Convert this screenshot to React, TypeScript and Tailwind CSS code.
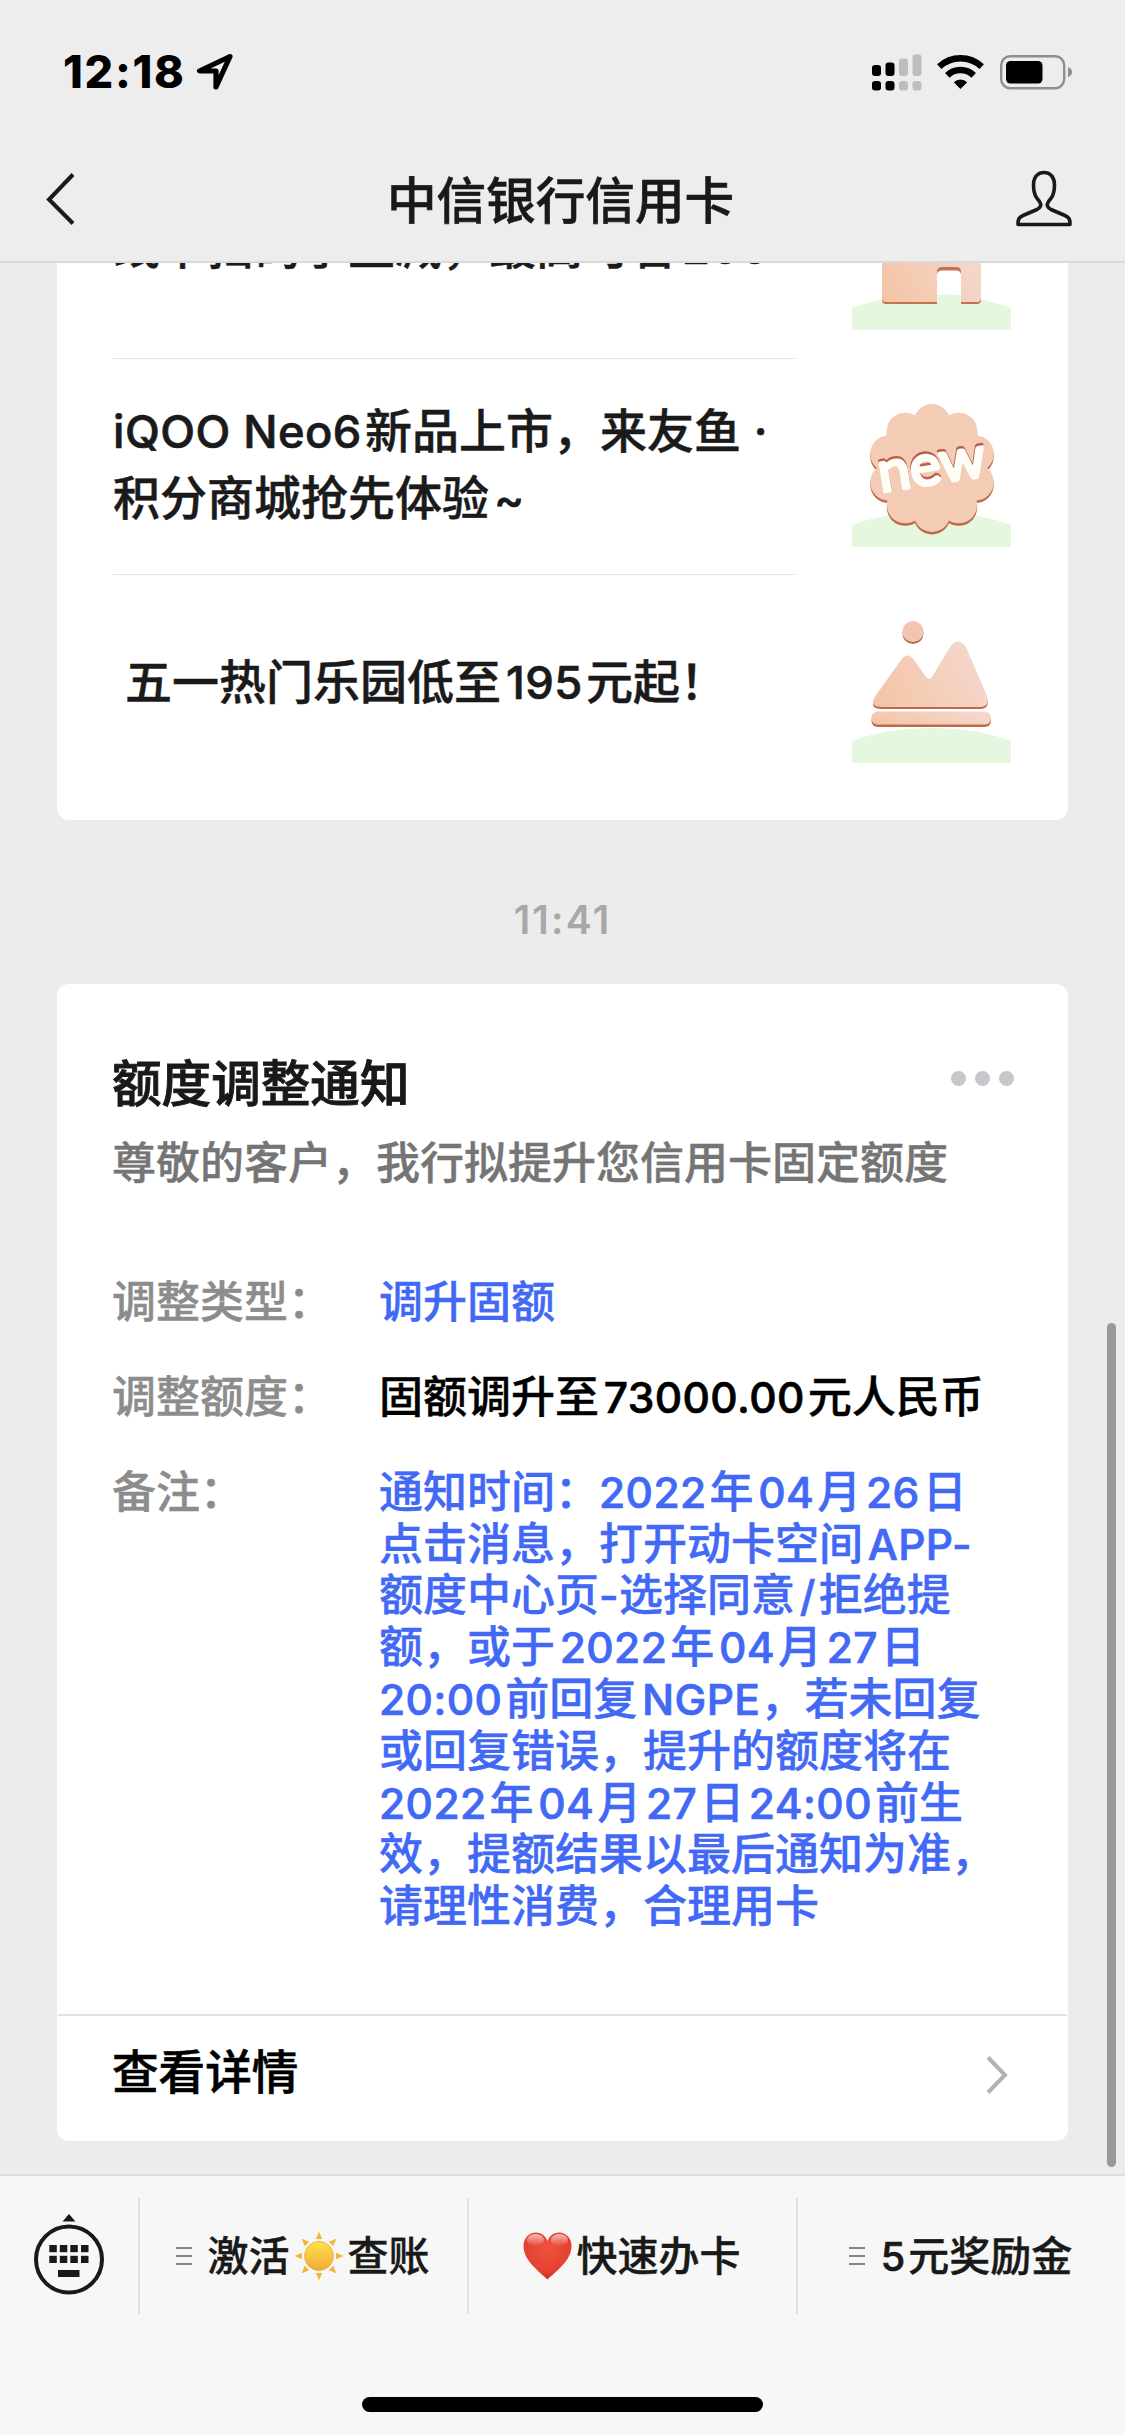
import type { ReactNode } from "react";
import clsx from "clsx";

const articles = [
  { title: ["线下扫码享立减，最高可省200"], art: <HouseArt />, className: "border-b pb-[9px]" },
  { title: ["iQOO Neo6新品上市，来友鱼 ·", "积分商城抢先体验~"], art: <NewArt />, className: "border-b pb-[5px]" },
  { title: ["五一热门乐园低至195元起！"], art: <MountainArt />, className: "pb-[3px] pl-3" },
];

const noteLines = [
  "通知时间：2022年04月26日",
  "点击消息，打开动卡空间APP-",
  "额度中心页-选择同意/拒绝提",
  "额，或于2022年04月27日",
  "20:00前回复NGPE，若未回复",
  "或回复错误，提升的额度将在",
  "2022年04月27日24:00前生",
  "效，提额结果以最后通知为准，",
  "请理性消费，合理用卡",
];

const hanzi = /[\u4e00-\u9fff]/;

// Latin runs are set a little smaller than the Chinese text around them,
// with a thin gap wherever they touch a Chinese character
function Mixed({ text }: { text: string }) {
  const runs = text.split(/([\x21-\x7e]+(?: [\x21-\x7e]+)*)/).filter(Boolean);
  return (
    <>
      {runs.map((run, i) => {
        if (!/^[\x21-\x7e]/.test(run)) return <span key={i}>{run}</span>;
        const before = runs[i - 1]?.slice(-1) ?? "";
        const after = runs[i + 1]?.[0] ?? "";
        return (
          <span
            key={i}
            className={clsx(
              "text-[0.965em] leading-none font-medium tracking-[0.010em] [-webkit-text-stroke:0.700px]",
              run !== "-" && hanzi.test(before) && "ml-[0.11em]",
              run !== "-" && hanzi.test(after) && "mr-[0.07em]"
            )}
          >
            {run}
          </span>
        );
      })}
    </>
  );
}

function ArtDefs({ id }: { id: string }) {
  return (
    <defs>
      <linearGradient id={id} x1="0" y1="0.6" x2="1" y2="0.3">
        <stop offset="0" stopColor="#f4c6a8" />
        <stop offset="1" stopColor="#f5d8ce" />
      </linearGradient>
    </defs>
  );
}

function Hill() {
  return <path d="M0 137Q34 124 79.500 124T159 137V159H0Z" fill="#e6f7e0" />;
}

function HouseArt() {
  return (
    <svg viewBox="0 0 159 159" className="mb-[2px] h-[159px] w-[159px]">
      <ArtDefs id="house" />
      <Hill />
      <path d="M30 60H129V129Q129 133 125 133H34Q30 133 30 129Z" fill="#c27450" />
      <path d="M30 60H129V127Q129 131 125 131H109V101Q109 96 104 96H90Q85 96 85 101V131H34Q30 131 30 127Z" fill="url(#house)" />
      <path d="M85 134V104Q85 99.500 90 99.500H104Q109 99.500 109 104V134Z" fill="#fff" />
      <path d="M85 134V124Q97 123 109 124V134Z" fill="#e6f7e0" />
    </svg>
  );
}

function NewArt() {
  const lobes = Array.from({ length: 10 }, (_, i) => {
    const a = (i * Math.PI) / 5;
    return { x: 80 + 45.5 * Math.sin(a), y: 80 - 45.5 * Math.cos(a) };
  });
  return (
    <svg viewBox="0 0 159 159" className="h-[159px] w-[159px]">
      <Hill />
      <g fill="#bb6a4b">
        {lobes.map((l, i) => (
          <circle key={i} cx={l.x} cy={l.y + 2.5} r="18.500" />
        ))}
      </g>
      <g fill="#f4cbb5">
        {lobes.map((l, i) => (
          <circle key={i} cx={l.x} cy={l.y} r="18.500" />
        ))}
        <circle cx="80" cy="80" r="47" />
      </g>
      <g transform="rotate(-9 80 82)" fontFamily="Lato" fontWeight="400" fontSize="57" textAnchor="middle" strokeWidth="3.500" strokeLinejoin="round">
        <text x="80" y="93.500" textLength="108" lengthAdjust="spacingAndGlyphs" fill="#b5614a" stroke="#b5614a">
          new
        </text>
        <text x="80" y="96" textLength="108" lengthAdjust="spacingAndGlyphs" fill="#fffdf8" stroke="#fffdf8">
          new
        </text>
      </g>
    </svg>
  );
}

function MountainArt() {
  const peaks =
    "M22 94L49 56Q55 47 62 56L74 73Q77 77 80 73L98 43Q106 32 114 43L135 92Q138 103 128 103H30Q18 103 22 94Z";
  return (
    <svg viewBox="0 0 159 159" className="h-[159px] w-[159px]">
      <ArtDefs id="mountain" />
      <Hill />
      <circle cx="61" cy="29.500" r="10.500" fill="#bb6a4b" />
      <circle cx="61" cy="27.500" r="10.500" fill="#f2c5b2" />
      <path d={peaks} transform="translate(0 2)" fill="#bb6a4b" />
      <path d={peaks} fill="url(#mountain)" />
      <rect x="19.500" y="110" width="119.500" height="13" rx="6" fill="#bb6a4b" />
      <rect x="19.500" y="107.500" width="119.500" height="13" rx="6" fill="url(#mountain)" />
    </svg>
  );
}

function StatusIcons() {
  return (
    <svg viewBox="0 0 202 40" className="h-10 w-[202px]">
      <g fill="#000">
        <rect x="2" y="14" width="9" height="11" rx="3" />
        <rect x="15.500" y="11.500" width="9" height="13.500" rx="3" />
        <rect x="2" y="30" width="9" height="9.500" rx="3" />
        <rect x="15.500" y="30" width="9" height="9.500" rx="3" />
      </g>
      <g fill="#bdbdbd">
        <rect x="29" y="7.500" width="9" height="17.500" rx="3" />
        <rect x="42.500" y="3.500" width="9" height="21.500" rx="3" />
        <rect x="29" y="30" width="9" height="9.500" rx="3" />
        <rect x="42.500" y="30" width="9" height="9.500" rx="3" />
      </g>
      <g fill="none" stroke="#000" strokeWidth="6.500">
        <path d="M69.300 15.700A31 31 0 0 1 111.700 15.700" />
        <path d="M77.300 24.300A19 19 0 0 1 103.700 24.300" />
      </g>
      <path d="M90.500 38L83.800 31.200A9.800 9.800 0 0 1 97.200 31.200Z" />
      <rect x="131.200" y="5.200" width="63" height="32" rx="9" fill="none" stroke="#8e8e8e" strokeWidth="2.400" />
      <rect x="136" y="10" width="36.500" height="22.500" rx="4.500" />
      <path d="M198 16Q202 17.500 202 21T198 26.200Z" fill="#8e8e8e" />
    </svg>
  );
}

function Header() {
  return (
    <header className="h-[263px] shrink-0 border-b-2 border-[#dadada] bg-[#ededed]">
      <div className="flex h-[146px] items-center justify-between pl-[63px] pr-[53px]">
        <div className="flex items-center gap-[10px]">
          <span className="mb-[3px] text-[45px] leading-[52px] font-extrabold tracking-[1.700px]">12:18</span>
          <svg viewBox="0 0 38 38" className="mb-[3px] h-[38px] w-[38px]" fill="none" stroke="#000" strokeWidth="5.200" strokeLinejoin="round">
            <path d="M34 3.500L3.500 18H20V34Z" />
          </svg>
        </div>
        <div className="mb-[5px]">
          <StatusIcons />
        </div>
      </div>
      <div className="grid h-[110px] grid-cols-[1fr_auto_1fr] items-center">
        <svg viewBox="0 0 30 54" className="mb-[5px] ml-[46px] h-[54px] w-[30px]" fill="none" stroke="#1a1a1a" strokeWidth="4">
          <path d="M27 2.500L3 27.500L27 51.500" />
        </svg>
        <h1 className="pr-1 text-[49.600px] leading-[60px] font-medium text-[#191919] [-webkit-text-stroke:0.600px]">
          中信银行信用卡
        </h1>
        <svg viewBox="0 0 58 58" className="mr-[52px] mb-[6px] h-[58px] w-[58px] justify-self-end" fill="none" stroke="#1a1a1a" strokeWidth="3.600" strokeLinejoin="round">
          <path d="M29 3.500C22 3.500 18.500 9 18.500 16.500C18.500 25 21 28.500 24.500 32.500C27 36 25.500 38.500 22 40.500L8 46.500C3.500 48.500 3 50.500 3 55.500H55C55 50.500 54.500 48.500 50 46.500L36 40.500C32.500 38.500 31 36 33.500 32.500C37 28.500 39.500 25 39.500 16.500C39.500 9 36 3.500 29 3.500Z" />
        </svg>
      </div>
    </header>
  );
}

function ArticleCard() {
  return (
    <section className="mx-[57px] shrink-0 rounded-[12px] bg-white pb-[29px]">
      {articles.map(({ title, art, className }, i) => (
        <div key={i} className="flex h-[216px] justify-between pr-[57px] pl-14">
          <div
            className={clsx(
              "flex w-[682px] flex-col justify-center border-[#e3e3e3] text-[47px] leading-[67px] font-medium whitespace-nowrap text-[#1a1a1a] [-webkit-text-stroke:0.500px]",
              className
            )}
          >
            {title.map((line) => (
              <p key={line}>
                <Mixed text={line} />
              </p>
            ))}
          </div>
          <div className="self-center">{art}</div>
        </div>
      ))}
    </section>
  );
}

function DetailRow({ label, children, className }: { label: string; children: ReactNode; className: string }) {
  return (
    <div className="flex">
      <dt className="w-[267px] shrink-0 text-[#8c8c8c]">{label}</dt>
      <dd className={className}>{children}</dd>
    </div>
  );
}

function NoticeCard() {
  return (
    <section className="mx-[57px] shrink-0 rounded-[12px] bg-white pt-[70px] [-webkit-text-stroke:0.400px]">
      <div className="pr-14 pl-[55px]">
        <div className="flex items-start justify-between">
          <h2 className="text-[49.600px] leading-[60px] font-medium text-[#191919] [-webkit-text-stroke:0.900px]">额度调整通知</h2>
          <div className="mt-[17px] mr-[-2px] flex gap-[9px]">
            <span className="h-[15px] w-[15px] rounded-full bg-[#c6c6cb]" />
            <span className="h-[15px] w-[15px] rounded-full bg-[#c6c6cb]" />
            <span className="h-[15px] w-[15px] rounded-full bg-[#c6c6cb]" />
          </div>
        </div>
        <p className="mt-[19px] text-[44px] leading-[60px] font-medium whitespace-nowrap text-[#757575]">
          尊敬的客户，我行拟提升您信用卡固定额度
        </p>
        <dl className="mt-[84px] space-y-[43px] text-[44px] leading-[51.800px] font-medium whitespace-nowrap">
          <DetailRow label="调整类型：" className="text-[#4169f5]">
            调升固额
          </DetailRow>
          <DetailRow label="调整额度：" className="text-black">
            <Mixed text="固额调升至73000.00元人民币" />
          </DetailRow>
          <DetailRow label="备注：" className="text-[#4169f5]">
            {noteLines.map((line) => (
              <p key={line}>
                <Mixed text={line} />
              </p>
            ))}
          </DetailRow>
        </dl>
      </div>
      <div className="mx-px mt-[81px] flex h-[127px] items-center justify-between border-t-2 border-[#e2e2e2] pr-[59px] pb-2 pl-[54px]">
        <span className="mb-[5px] text-[46.600px] leading-[60px] font-medium [-webkit-text-stroke:0.600px]">查看详情</span>
        <svg viewBox="0 0 22 38" className="h-[38px] w-[22px]" fill="none" stroke="#b2b2b2" strokeWidth="4">
          <path d="M2 1.500L19 19L2 36.500" />
        </svg>
      </div>
    </section>
  );
}

function KeyboardIcon() {
  const cols = [15.3, 25.8, 36.3, 47];
  return (
    <svg viewBox="0 0 70 82" className="h-[82px] w-[70px]" fill="#191919">
      <path d="M35 1L41.500 8.500H28.500Z" />
      <circle cx="35" cy="46.500" r="33" fill="none" stroke="#191919" strokeWidth="4" />
      {cols.map((x) => (
        <g key={x}>
          <rect x={x} y="32" width="7.500" height="7.200" />
          <rect x={x} y="42.800" width="7.500" height="7.200" />
        </g>
      ))}
      <rect x="24" y="57" width="21.500" height="7" />
    </svg>
  );
}

function MenuLines() {
  return (
    <span className="flex w-4 flex-col gap-1.5">
      <span className="h-0.5 bg-[#858585]" />
      <span className="h-0.5 bg-[#858585]" />
      <span className="h-0.5 bg-[#858585]" />
    </span>
  );
}

function Sun() {
  return (
    <svg viewBox="0 0 50 50" className="mx-1 h-[50px] w-[50px]">
      <defs>
        <linearGradient id="sun" x1="0" y1="0" x2="0" y2="1">
          <stop offset="0" stopColor="#fae44c" />
          <stop offset="1" stopColor="#f3a935" />
        </linearGradient>
      </defs>
      {[0, 45, 90, 135, 180, 225, 270, 315].map((deg) => (
        <path key={deg} d="M25 0.500L28.200 8H21.800Z" transform={`rotate(${deg} 25 25)`} fill="#f2b63d" />
      ))}
      <circle cx="25" cy="25" r="14.500" fill="url(#sun)" stroke="#eda836" strokeWidth="0.800" />
    </svg>
  );
}

function Heart() {
  return (
    <svg viewBox="0 0 49 48" className="mr-[5px] h-12 w-[49px]">
      <defs>
        <radialGradient id="heart" cx="0.500" cy="0.350" r="0.650">
          <stop offset="0" stopColor="#ee5340" />
          <stop offset="0.750" stopColor="#e5402f" />
          <stop offset="1" stopColor="#c92a22" />
        </radialGradient>
        <linearGradient id="shine" x1="0" y1="0" x2="0" y2="1">
          <stop offset="0" stopColor="#fff" stopOpacity="0.650" />
          <stop offset="1" stopColor="#fff" stopOpacity="0" />
        </linearGradient>
      </defs>
      <path d="M24.500 47.500C17 40 0.500 29 0.500 14C0.500 6 6 0.500 13 0.500C18.500 0.500 22.500 4 24.500 9C26.500 4 30.500 0.500 36 0.500C43 0.500 48.500 6 48.500 14C48.500 29 32 40 24.500 47.500Z" fill="url(#heart)" />
      <ellipse cx="12.500" cy="8" rx="8.500" ry="6" fill="url(#shine)" />
      <ellipse cx="36.500" cy="8" rx="8.500" ry="6" fill="url(#shine)" />
    </svg>
  );
}

function MenuItem({ children, lines }: { children: ReactNode; lines?: boolean }) {
  return (
    <button className="flex h-[116px] flex-1 items-center justify-center gap-4 border-l-2 border-[#e2e2e2] pr-[2px]">
      {lines && <MenuLines />}
      <span className="flex items-center text-[41px] leading-[50px] font-medium whitespace-nowrap text-[#191919] [-webkit-text-stroke:0.400px]">
        {children}
      </span>
    </button>
  );
}

function BottomMenu() {
  return (
    <footer className="flex h-[261px] shrink-0 flex-col items-center border-t-2 border-[#dedede] bg-[#f7f7f7] pt-[22px]">
      <nav className="flex w-full">
        <button className="flex w-[138px] items-start justify-center pt-[15px]">
          <KeyboardIcon />
        </button>
        <MenuItem lines>
          激活
          <Sun />
          查账
        </MenuItem>
        <MenuItem>
          <Heart />
          快速办卡
        </MenuItem>
        <MenuItem lines>
          <span>
            <Mixed text="5元奖励金" />
          </span>
        </MenuItem>
      </nav>
      <div className="mt-[83px] h-[15px] w-[401px] rounded-full bg-black" />
    </footer>
  );
}

export default function App() {
  return (
    <div className="relative flex h-[2435px] w-[1125px] flex-col overflow-hidden bg-[#ececec] font-['Inter','Noto_Sans_CJK_SC',sans-serif] text-black">
      <Header />
      <main className="flex min-h-0 flex-1 flex-col justify-end overflow-hidden pb-[33px]">
        <ArticleCard />
        <time className="mt-[80px] mb-[44px] shrink-0 text-center text-[39px] leading-[40px] font-semibold tracking-[2.200px] text-[#a8a8a8]">
          11:41
        </time>
        <NoticeCard />
      </main>
      <BottomMenu />
      {/* scroll thumb */}
      <div className="absolute top-[1323px] right-[9px] h-[844px] w-[9px] rounded-full bg-[#999]" />
    </div>
  );
}
